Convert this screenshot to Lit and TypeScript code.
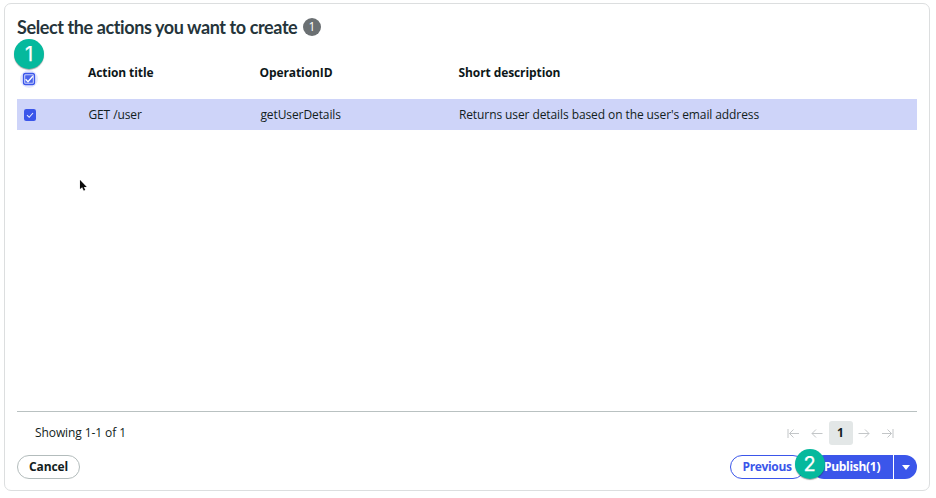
import { LitElement, html, css, svg } from "lit";
import { customElement, property } from "lit/decorators.js";

@customElement("check-box")
class CheckBox extends LitElement {
  @property({ type: Boolean, reflect: true }) focused = false;

  static styles = css`
    :host { display: block; width: 18px; height: 18px; }
    svg { display: block; }
  `;

  render() {
    return html`<svg width="18" height="18" viewBox="0 0 18 18">
      ${this.focused
        ? svg`<circle cx="9" cy="9" r="9" fill="#e6e9fd"/>
            <rect x="3.5" y="3.5" width="11" height="11" rx="2" fill="#c9d0fb" stroke="#3b56ea" stroke-width="1.3"/>
            <rect x="5.2" y="5.2" width="7.6" height="7.6" rx=".6" fill="#4a63ec"/>
            <path d="M5.6 9.3L8 11.7L12.8 6.2" fill="none" stroke="#fff" stroke-width="1.3"/>`
        : svg`<rect x="3" y="3" width="12" height="12" rx="2.2" fill="#3b56ea"/>
            <path d="M6 9.2L8.2 11.3L12 7" fill="none" stroke="#e9ecff" stroke-width="1.1"/>`}
    </svg>`;
  }
}

@customElement("step-marker")
class StepMarker extends LitElement {
  static styles = css`
    :host {
      display: flex; align-items: center; justify-content: center; box-sizing: border-box;
      width: 30px; height: 30px; padding-top: 1px; border-radius: 50%;
      background: #05b99d; color: #fff; box-shadow: 0 1px 1px rgba(0, 0, 0, .35);
      font: 20px/29px Inter, "Liberation Sans", sans-serif;
      -webkit-text-stroke: .25px #fff;
    }
  `;
  render() {
    return html`<slot></slot>`;
  }
}

const arrows = {
  first: "M1 1V10M12 5.5H2.5M6.5 1.5L2.5 5.5L6.5 9.5",
  prev: "M11.5 5.5H1M5 1.5L1 5.5L5 9.5",
  next: "M.5 5.5H11M7 1.5L11 5.5L7 9.5",
  last: "M11 1V10M0 5.5H9.5M5.5 1.5L9.5 5.5L5.5 9.5",
};

@customElement("app-root")
class AppRoot extends LitElement {
  private rows = [
    { title: "GET /user", operation: "getUserDetails", description: "Returns user details based on the user's email address" },
  ];

  static styles = css`
    :host {
      display: block; height: 498px; box-sizing: border-box; padding: 3px 6px 7px 4px;
      background: #fff; color: #121d21; overflow: hidden;
      font: 12px/18px "Open Sans", "Noto Sans", sans-serif;
      letter-spacing: -.09px;
    }
    .card {
      position: relative; box-sizing: border-box; height: 488px; padding: 0 12px;
      border: 1px solid #dcdedf; border-radius: 7px;
      display: flex; flex-direction: column;
    }
    .heading { display: flex; align-items: center; gap: 5.5px; height: 46px; }
    h1 {
      margin: 0; font: 700 18px/24px Lato, sans-serif; color: #25343a;
      letter-spacing: -.4px; white-space: nowrap;
    }
    .count {
      width: 18px; height: 18px; border-radius: 50%; background: #6b7073; color: #fff;
      font-size: 12px; line-height: 18px; text-align: center;
    }
    .row {
      display: grid; grid-template-columns: 71px 172px 198.5px 1fr;
      align-items: center; white-space: nowrap;
    }
    .head { height: 49px; font-weight: 700; color: #0d1719; }
    .head span { transform: translateY(-2px); }
    .head span:nth-of-type(2) { margin-left: -.5px; }
    .head check-box { margin: 8px 0 0 3px; }
    .item { height: 31px; background: #ced4f9; }
    .item span { padding-left: .4px; }
    .item check-box { margin-left: 3.5px; }
    .space { flex: 1; border-bottom: 1px solid #b9c1c1; }
    .pager { display: flex; align-items: center; height: 43px; padding: 0 23px 0 18px; }
    .pager nav { display: flex; align-items: center; gap: 12px; margin: -1px 0 0 auto; }
    .pager > span { margin-top: -1px; }
    .pager svg { display: block; fill: none; stroke: #c3c6c8; stroke-width: 1; }
    .page {
      width: 24px; height: 24px; border-radius: 3px; background: #e3e7e7;
      margin: 0 -6.5px; text-align: center; font-weight: 700; line-height: 24px;
    }
    .actions { display: flex; align-items: center; height: 24px; margin-bottom: 11px; }
    button {
      box-sizing: border-box; height: 24px; padding: 0; margin: 0; border: 1px solid #b3bcbc;
      border-radius: 12px; background: #fff; color: #121d21;
      font: 700 12px/20px "Open Sans", sans-serif; letter-spacing: -.15px; white-space: nowrap;
    }
    .cancel { width: 63px; }
    .previous { width: 75px; margin: 0 7px 0 auto; border-color: #3b56ea; color: #3b56ea; text-align: left; padding-left: 11.5px; letter-spacing: -.35px; }
    .publish { width: 81px; border: 0; border-radius: 12px 0 0 12px; background: #3b56ea; color: #fff; text-align: left; padding-left: 12px; letter-spacing: -.3px; }
    .more { width: 23px; margin-left: 1px; border: 0; border-radius: 0 12px 12px 0; background: #3b56ea; display: flex; align-items: center; justify-content: center; }
    .one { position: absolute; left: 9px; top: 35px; }
    .two { position: absolute; left: 789.5px; top: 445px; }
    .cursor { position: absolute; left: 73px; top: 174px; }
  `;

  private arrow(path: string) {
    return html`<svg width="12" height="11" viewBox="0 0 12 11"><path d=${path} /></svg>`;
  }

  render() {
    return html`
      <main class="card">
        <div class="heading">
          <h1>Select the actions you want to create</h1>
          <span class="count">1</span>
        </div>
        <div class="row head">
          <check-box focused></check-box>
          <span>Action title</span><span>OperationID</span><span>Short description</span>
        </div>
        ${this.rows.map(
          (r) => html`<div class="row item">
            <check-box></check-box>
            <span>${r.title}</span><span>${r.operation}</span><span>${r.description}</span>
          </div>`
        )}
        <div class="space"></div>
        <div class="pager">
          <span>Showing 1-1 of 1</span>
          <nav>
            ${this.arrow(arrows.first)}${this.arrow(arrows.prev)}
            <span class="page">1</span>
            ${this.arrow(arrows.next)}${this.arrow(arrows.last)}
          </nav>
        </div>
        <div class="actions">
          <button class="cancel">Cancel</button>
          <button class="previous">Previous</button>
          <button class="publish">Publish(1)</button>
          <button class="more"><svg width="8" height="5" viewBox="0 0 8 5"><path d="M0 0H8L4 5Z" fill="#fff" /></svg></button>
        </div>
        <step-marker class="one">1</step-marker>
        <step-marker class="two">2</step-marker>
        <svg class="cursor" width="12" height="16" viewBox="0 0 12 16">
          <path d="M2 2V11L4.2 9.3L5.7 12.6L7.2 12L5.8 8.9H8.7Z" fill="#0b0b0b" stroke="#e4e4e4" stroke-width="1" paint-order="stroke" />
        </svg>
      </main>
    `;
  }
}
